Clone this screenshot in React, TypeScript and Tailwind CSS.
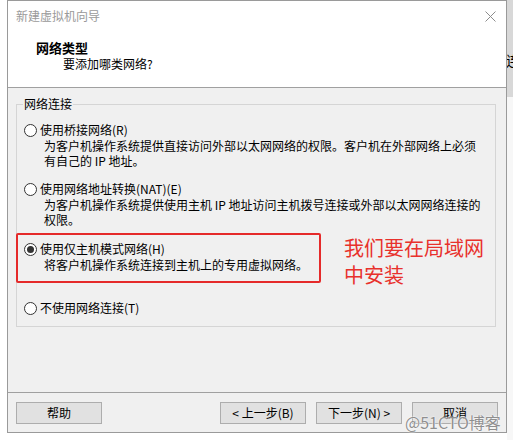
import React from 'react';

const font = { fontFamily: '"Noto Sans CJK SC", "Noto Sans", sans-serif' };

const Radio: React.FC<{ checked?: boolean }> = ({ checked }) => (
  <span className="w-[13px] h-[13px] rounded-full border border-[#333333] bg-white flex items-center justify-center shrink-0">
    {checked && <span className="w-[7px] h-[7px] rounded-full bg-[#333333]" />}
  </span>
);

const Option: React.FC<{ label: string; lines?: string[]; checked?: boolean; className?: string }> = ({
  label,
  lines = [],
  checked,
  className = '',
}) => (
  <div className={className}>
    <div className="flex items-center gap-[3px] h-[16px] leading-[16px]">
      <Radio checked={checked} />
      <span>{label}</span>
    </div>
    {lines.map((l) => (
      <div key={l} className="ml-[20px] leading-[15px] h-[15px] whitespace-nowrap">
        {l}
      </div>
    ))}
  </div>
);

const Button: React.FC<{ children: React.ReactNode }> = ({ children }) => (
  <button className="w-[86px] h-[22px] bg-[#e1e1e1] border border-[#adadad] text-[12px] text-black leading-none flex items-center justify-center">
    {children}
  </button>
);

export default function App() {
  return (
    <div className="relative w-[513px] h-[440px] bg-white overflow-hidden flex text-[12px] text-black" style={font}>
      <div className="ml-[7px] w-[500px] h-[433px] border border-[#9a9a9a] bg-[#f0f0f0] flex flex-col shrink-0">
        {/* header */}
        <div className="h-[87px] bg-white border-b border-[#a0a0a0] shrink-0">
          <div className="h-[30px] flex items-center justify-between pl-[8px] pr-[10px]">
            <span className="text-[#9a9a9a]">新建虚拟机向导</span>
            <svg width="11" height="11" viewBox="0 0 11 11">
              <path d="M0.5 0.5 L10.5 10.5 M10.5 0.5 L0.5 10.5" stroke="#8c8c8c" strokeWidth="1" />
            </svg>
          </div>
          <div className="mt-[9px] pl-[28px] font-bold text-[13px] leading-[16px]">网络类型</div>
          <div className="pl-[55px] leading-[16px]">要添加哪类网络?</div>
        </div>

        {/* body */}
        <div className="h-[304px] shrink-0 pl-[8px] pt-[8px]">
          <fieldset className="w-[480px] border border-[#d5d5d5] px-[7px] pb-[10px]">
            <legend className="px-[1px] ml-[-1px] leading-[16px]">网络连接</legend>
            <Option
              className="mt-[10px]"
              label="使用桥接网络(R)"
              lines={['为客户机操作系统提供直接访问外部以太网网络的权限。客户机在外部网络上必须', '有自己的 IP 地址。']}
            />
            <Option
              className="mt-[13px]"
              label="使用网络地址转换(NAT)(E)"
              lines={['为客户机操作系统提供使用主机 IP 地址访问主机拨号连接或外部以太网网络连接的', '权限。']}
            />
            <div className="relative mt-[14px]">
              <Option checked label="使用仅主机模式网络(H)" lines={['将客户机操作系统连接到主机上的专用虚拟网络。']} />
              <div className="absolute left-[-8px] top-[-8px] w-[305px] h-[50px] border-[2.5px] border-[#e52a2a] rounded-[2px]" />
              <div className="absolute left-[320px] top-[-7px] text-[20px] leading-[27px] text-[#e8312c] whitespace-nowrap">
                我们要在局域网
                <br />
                中安装
              </div>
            </div>
            <Option className="mt-[28px]" label="不使用网络连接(T)" />
          </fieldset>
        </div>

        {/* footer */}
        <div className="flex-1 border-t border-[#a0a0a0] pt-[9px] pl-[8px] pr-[8px] flex justify-between items-start">
          <Button>帮助</Button>
          <div className="flex gap-[10px]">
            <Button>&lt; 上一步(B)</Button>
            <Button>下一步(N) &gt;</Button>
            <Button>取消</Button>
          </div>
        </div>
      </div>

      {/* background strip beyond the dialog */}
      <div className="flex-1 flex flex-col">
        <div className="h-[97px] bg-[#d8d8d8] pt-[51px] overflow-hidden">
          <span className="block text-[14px] leading-[18px] ml-[-1px]">连</span>
        </div>
        <div className="flex-1 bg-[#f7f7f7]" />
      </div>

      {/* watermark */}
      <div className="absolute left-[405px] top-[413px] text-[16px] leading-[18px] text-[#8f8f8f] [text-shadow:0_0_2px_#fff,0_0_1px_#fff]">
        @51CTO博客
      </div>
    </div>
  );
}
